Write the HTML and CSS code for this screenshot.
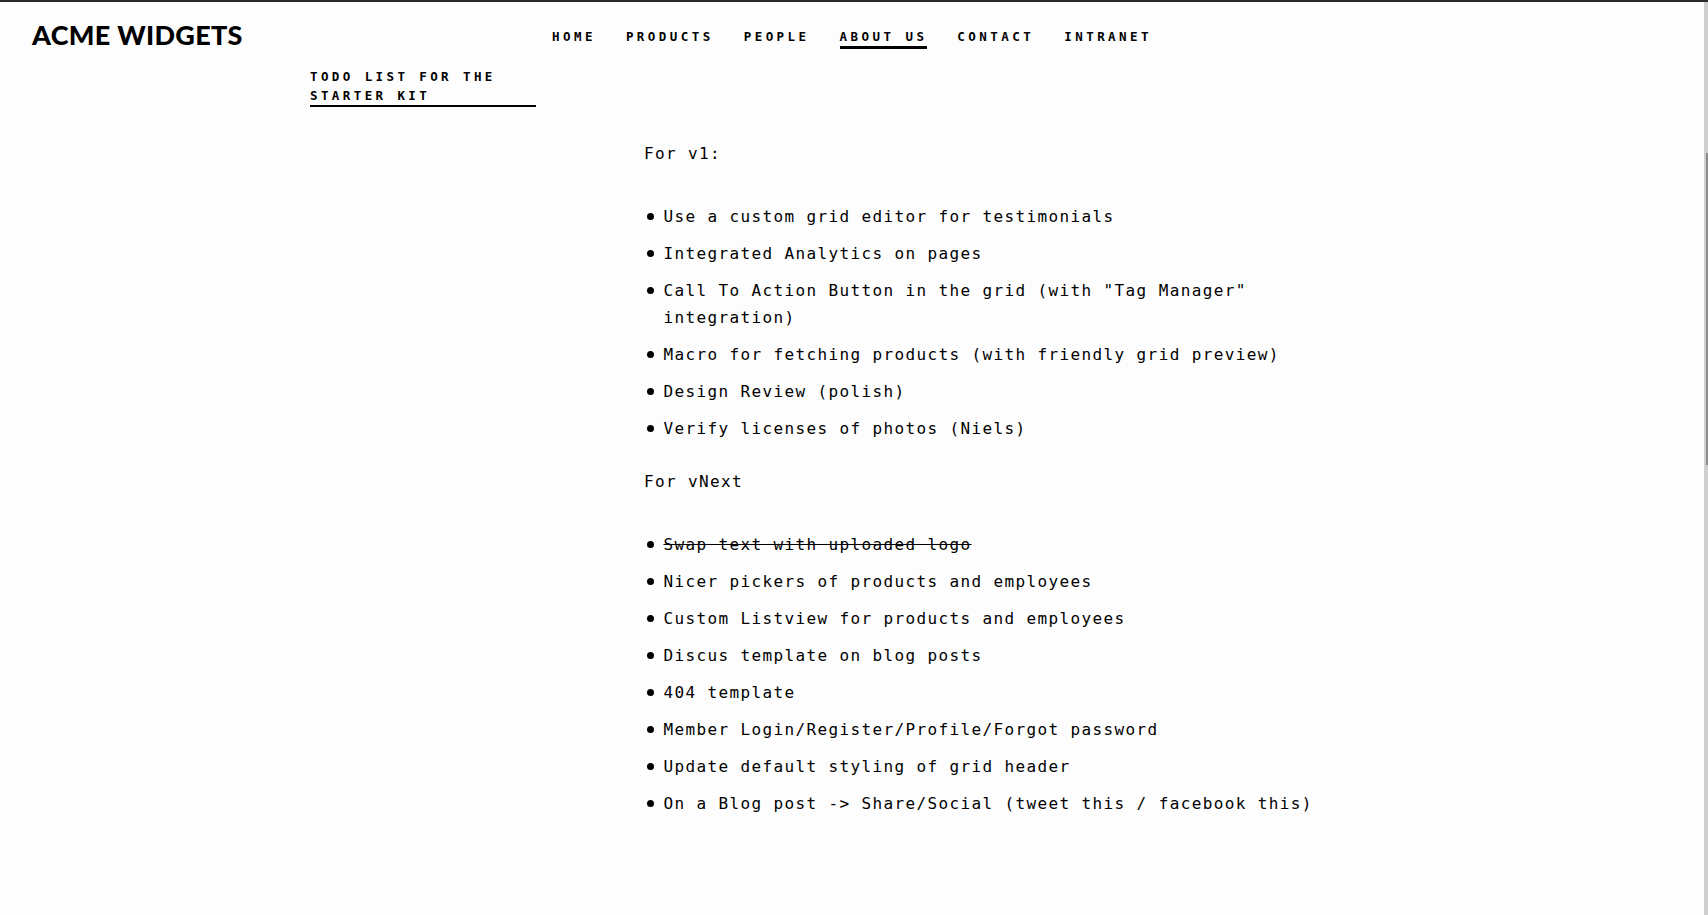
FILE: index.html
```html
<!DOCTYPE html>
<html lang="en">
<head>
<meta charset="utf-8">
<title>Todo list for the starter kit</title>
<link rel="stylesheet" href="styles.css">
</head>
<body>
<div class="page">
  <header class="header">
    <a class="logo" href="#">ACME WIDGETS</a>
    <nav class="nav">
      <a href="#">HOME</a>
      <a href="#">PRODUCTS</a>
      <a href="#">PEOPLE</a>
      <a href="#" class="active">ABOUT US</a>
      <a href="#">CONTACT</a>
      <a href="#">INTRANET</a>
    </nav>
    <div></div>
  </header>
  <main class="main">
    <aside class="sidebar">
      <a class="side-title" href="#">TODO LIST FOR THE STARTER KIT</a>
    </aside>
    <section class="content">
      <p>For v1:</p>
      <ul>
        <li>Use a custom grid editor for testimonials</li>
        <li>Integrated Analytics on pages</li>
        <li>Call To Action Button in the grid (with "Tag Manager" integration)</li>
        <li>Macro for fetching products (with friendly grid preview)</li>
        <li>Design Review (polish)</li>
        <li>Verify licenses of photos (Niels)</li>
      </ul>
      <p>For vNext</p>
      <ul>
        <li><del>Swap text with uploaded logo</del></li>
        <li>Nicer pickers of products and employees</li>
        <li>Custom Listview for products and employees</li>
        <li>Discus template on blog posts</li>
        <li>404 template</li>
        <li>Member Login/Register/Profile/Forgot password</li>
        <li>Update default styling of grid header</li>
        <li>On a Blog post -&gt; Share/Social (tweet this / facebook this)</li>
      </ul>
    </section>
  </main>
</div>
<div class="scrollbar"><div class="thumb"></div></div>
</body>
</html>
```
FILE: styles.css
```css
* { box-sizing: border-box; }
html, body { margin: 0; padding: 0; }
body {
  display: grid;
  grid-template-columns: 1fr 4px;
  height: 915px;
  overflow: hidden;
  background: #fdfdfd;
  color: #000;
  border-top: 2px solid #2b2b2b;
  font-family: "DejaVu Sans Mono", "Liberation Mono", monospace;
}
.page { min-width: 0; }
.scrollbar {
  background: #cfcfcf;
  padding-top: 151px;
  padding-left: 2px;
}
.thumb {
  width: 2px;
  height: 312px;
  background: #8a8a8a;
}
a { color: #000; text-decoration: none; }

.header {
  display: grid;
  grid-template-columns: 1fr auto 1fr;
  align-items: start;
  padding: 26px 28px 0;
}
.logo {
  justify-self: start;
  font-family: "Lato", sans-serif;
  font-weight: 900;
  font-size: 27px;
  line-height: 28px;
  letter-spacing: 0.3px;
  margin-top: -7px;
  padding-left: 4px;
}
.nav {
  display: flex;
  gap: 30px;
}
.nav a {
  font-weight: 700;
  font-size: 12.5px;
  line-height: 18px;
  letter-spacing: 3.45px;
  border-bottom: 3px solid transparent;
}
.nav a.active { border-bottom-color: #000; }

.main {
  display: grid;
  grid-template-columns: 226px 1fr;
  column-gap: 108px;
  width: 1084px;
  margin: 0 auto;
  padding-top: 18px;
}
.side-title {
  display: block;
  font-weight: 700;
  font-size: 12.5px;
  line-height: 19px;
  letter-spacing: 3.4px;
  border-bottom: 2px solid #000;
  padding-right: 20px;
}
.content {
  max-width: 700px;
  padding-top: 72.5px;
  font-size: 16px;
  line-height: 27px;
  letter-spacing: 1.37px;
}
.content p { margin: 0; }
.content ul {
  list-style: none;
  margin: 36px 0 26px;
  padding: 0;
}
.content li {
  padding-left: 19.5px;
}
.content li + li { margin-top: 10px; }
.content li::before {
  content: "";
  display: inline-block;
  width: 7px;
  height: 7px;
  border-radius: 50%;
  background: #000;
  margin-left: -16.5px;
  margin-right: 9.5px;
  vertical-align: 2px;
}
del { text-decoration: line-through; }
```
